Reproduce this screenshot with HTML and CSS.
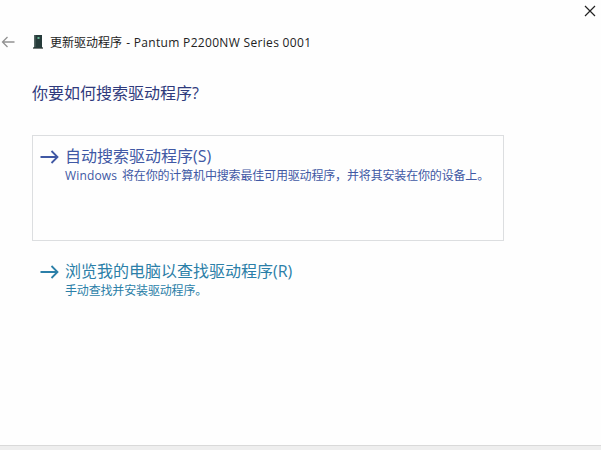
FILE: index.html
```html
<!DOCTYPE html>
<html lang="zh-CN">
<head>
    <meta charset="UTF-8">
    <meta name="viewport" content="width=device-width, initial-scale=1.0">
    <title>更新驱动程序</title>
    <link rel="stylesheet" href="styles.css">
</head>
<body>
    <div class="wizard">
        <div class="window-bar">
            <svg class="close" width="12" height="12" viewBox="0 0 12 12">
                <path d="M1 1L11 11M11 1L1 11" />
            </svg>
        </div>

        <header class="title-row">
            <svg class="back" width="14" height="12" viewBox="0 0 14 12">
                <path d="M13.5 6H1.5M6.5 1L1.5 6L6.5 11" />
            </svg>
            <svg class="device" width="12" height="16" viewBox="0 0 12 16">
                <rect x="1" y="13" width="10" height="2" fill="#777c7b" />
                <rect x="2" y="1" width="8" height="13" fill="#263b3a" />
                <rect x="2" y="1" width="1.5" height="12" fill="#526461" />
                <rect x="5.5" y="3" width="2" height="2" fill="#69b594" />
            </svg>
            <span class="title">更新驱动程序 <span class="latin">- Pantum P2200NW Series 0001</span></span>
        </header>

        <main class="content">
            <h1>你要如何搜索驱动程序?</h1>

            <div class="option selected">
                <svg class="arrow" width="19" height="14" viewBox="0 0 19 14">
                    <path d="M0.5 7H17M11.5 1L17.5 7L11.5 13" />
                </svg>
                <div class="option-text">
                    <h2>自动搜索驱动程序(S)</h2>
                    <p><span class="word">Windows</span>将在你的计算机中搜索最佳可用驱动程序，并将其安装在你的设备上。</p>
                </div>
            </div>

            <div class="option browse">
                <svg class="arrow" width="19" height="14" viewBox="0 0 19 14">
                    <path d="M0.5 7H17M11.5 1L17.5 7L11.5 13" />
                </svg>
                <div class="option-text">
                    <h2>浏览我的电脑以查找驱动程序(R)</h2>
                    <p>手动查找并安装驱动程序。</p>
                </div>
            </div>
        </main>

        <footer class="footer"></footer>
    </div>
</body>
</html>
```
FILE: styles.css
```css
* {
    margin: 0;
    padding: 0;
    box-sizing: border-box;
}

body {
    background: #fefefe;
    font-family: "Open Sans", "Noto Sans CJK SC", sans-serif;
    overflow: hidden;
}

svg {
    display: block;
    flex: none;
    fill: none;
}

.wizard {
    display: flex;
    flex-direction: column;
    height: 450px;
}

.window-bar {
    display: flex;
    justify-content: flex-end;
    height: 32px;
    padding: 5px 5px 0 0;
}

.close {
    stroke: #222;
    stroke-width: 1.2;
}

.title-row {
    display: flex;
    align-items: center;
    height: 20px;
    padding-left: 1px;
}

.back {
    stroke: #929292;
    stroke-width: 1.3;
}

.device {
    margin-left: 17px;
}

.title {
    margin-left: 6px;
    padding-top: 2px;
    font-size: 12px;
    line-height: 20px;
    color: #222;
    white-space: nowrap;
}

.latin {
    margin-left: 1px;
    letter-spacing: 0.32px;
}

.content {
    flex: 1;
    padding: 29px 0 0 32px;
}

h1 {
    height: 24px;
    font-size: 16px;
    font-weight: normal;
    line-height: 24px;
    color: #2f3a7c;
}

.option {
    display: flex;
    width: 472px;
    padding: 10px 0 0 7px;
    border: 1px solid transparent;
    white-space: nowrap;
}

.selected {
    height: 106px;
    margin-top: 30px;
    color: #4058a4;
    border-color: #dcdee0;
}

.browse {
    height: 60px;
    margin-top: 9px;
    color: #2b7fa8;
}

.arrow {
    margin-top: 4px;
    stroke: currentColor;
    stroke-width: 1.8;
}

.option-text {
    margin-left: 6px;
}

h2 {
    height: 20px;
    font-size: 16px;
    font-weight: normal;
    line-height: 20px;
}

p {
    height: 18px;
    margin-top: 1px;
    font-size: 12px;
    line-height: 18px;
    letter-spacing: -0.16px;
}

.word {
    display: inline-block;
    width: 57px;
    letter-spacing: 0.15px;
}

.footer {
    height: 5px;
    background: #eee;
    border-top: 1px solid #d9d9d9;
}
```
